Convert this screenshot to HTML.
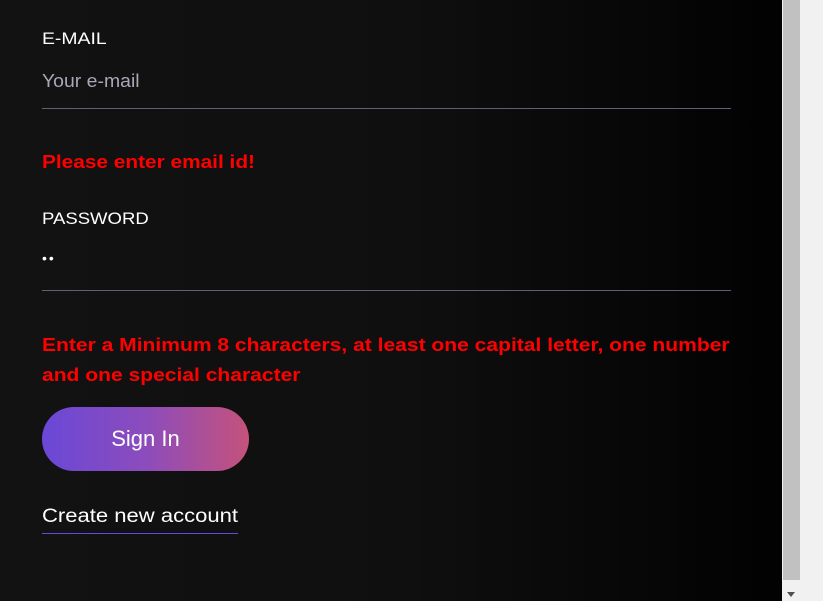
<!DOCTYPE html>
<html><head><style>
html,body{margin:0;padding:0;}
body{width:823px;height:601px;overflow:hidden;position:relative;font-family:"Liberation Sans",sans-serif;background:linear-gradient(90deg,#121212 0%,#0f0f0f 50%,#000 100%);}
.sb{position:absolute;left:782px;top:0;width:41px;height:601px;background:#f1f1f1;}
.th{position:absolute;left:783px;top:0;width:17px;height:580px;background:#c1c1c1;}
.ar{position:absolute;left:787px;top:592px;width:0;height:0;border-left:4px solid transparent;border-right:4px solid transparent;border-top:5px solid #505050;}
.lbl{position:absolute;left:42px;color:#fff;font-size:17px;transform-origin:left top;white-space:nowrap;}
.line{position:absolute;left:42px;width:689px;height:1px;background:#5a6178;}
.err{position:absolute;left:42px;color:#ff0000;font-weight:bold;font-size:18px;white-space:nowrap;transform-origin:left top;}
.btn{position:absolute;left:42px;top:407px;width:207px;height:64px;border-radius:32px;background:linear-gradient(90deg,#6a48d7 0%,#8c4cbc 50%,#c5527b 100%);color:#fff;font-size:22px;text-align:center;line-height:64px;}
.ca{position:absolute;left:42px;top:506px;color:#fff;font-size:19px;width:196px;border-bottom:1px solid #6a48d7;height:27px;}
.ca span{display:inline-block;transform:scaleX(1.16);transform-origin:left top;white-space:nowrap;}
</style></head><body>
<div class="lbl" style="top:29px;transform:scaleX(1.14)">E-MAIL</div>
<div class="lbl" style="top:71px;color:#a8a8b8;font-size:18px;transform:scaleX(1.08)">Your e-mail</div>
<div class="line" style="top:108px"></div>
<div class="err" style="top:152px;transform:scaleX(1.157)">Please enter email id!</div>
<div class="lbl" style="top:209px;transform:scaleX(1.09)">PASSWORD</div>
<div class="lbl" style="top:250px;font-size:14px;letter-spacing:2px">••</div>
<div class="line" style="top:290px"></div>
<div class="err" style="top:330px;line-height:30px;transform:scaleX(1.169)">Enter a Minimum 8 characters, at least one capital letter, one number<br>and one special character</div>
<div class="btn">Sign In</div>
<div class="ca"><span>Create new account</span></div>
<div class="sb"></div><div class="th"></div><div class="ar"></div>
</body></html>
